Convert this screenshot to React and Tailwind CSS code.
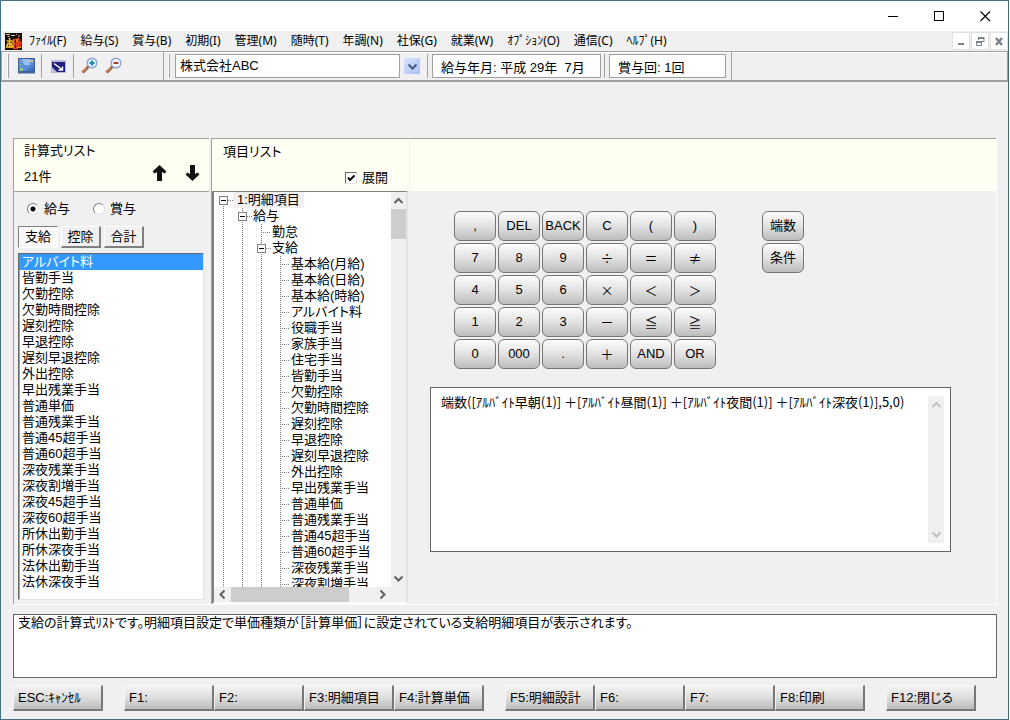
import React, { useState } from 'react';

const MENUS = ['ﾌｧｲﾙ(F)', '給与(S)', '賞与(B)', '初期(I)', '管理(M)', '随時(T)', '年調(N)', '社保(G)', '就業(W)', 'ｵﾌﾟｼｮﾝ(O)', '通信(C)', 'ﾍﾙﾌﾟ(H)'];

const FORMULAS = [
  'アルバイト料', '皆勤手当', '欠勤控除', '欠勤時間控除', '遅刻控除', '早退控除', '遅刻早退控除',
  '外出控除', '早出残業手当', '普通単価', '普通残業手当', '普通45超手当', '普通60超手当', '深夜残業手当',
  '深夜割増手当', '深夜45超手当', '深夜60超手当', '所休出勤手当', '所休深夜手当', '法休出勤手当', '法休深夜手当',
];

const TREE = [
  { depth: 0, label: '1:明細項目', open: true },
  { depth: 1, label: '給与', open: true },
  { depth: 2, label: '勤怠' },
  { depth: 2, label: '支給', open: true },
  ...[
    '基本給(月給)', '基本給(日給)', '基本給(時給)', 'アルバイト料', '役職手当', '家族手当', '住宅手当',
    '皆勤手当', '欠勤控除', '欠勤時間控除', '遅刻控除', '早退控除', '遅刻早退控除', '外出控除',
    '早出残業手当', '普通単価', '普通残業手当', '普通45超手当', '普通60超手当', '深夜残業手当', '深夜割増手当',
  ].map((label) => ({ depth: 3, label })),
];

const KEYS = [
  ',', 'DEL', 'BACK', 'C', '(', ')',
  '7', '8', '9', '÷', '＝', '≠',
  '4', '5', '6', '×', '＜', '＞',
  '1', '2', '3', '－', '≦', '≧',
  '0', '000', '.', '＋', 'AND', 'OR',
];

const FUNCTION_KEYS = [
  ['ESC:ｷｬﾝｾﾙ'],
  ['F1:', 'F2:', 'F3:明細項目', 'F4:計算単価'],
  ['F5:明細設計', 'F6:', 'F7:', 'F8:印刷'],
  ['F12:閉じる'],
];

const FORMULA = '端数([ｱﾙﾊﾞｲﾄ早朝(1)] ＋[ｱﾙﾊﾞｲﾄ昼間(1)] ＋[ｱﾙﾊﾞｲﾄ夜間(1)] ＋[ｱﾙﾊﾞｲﾄ深夜(1)],5,0)';

function Chevron({ dir, className }) {
  const d = {
    up: 'M1.5 8 L5.5 4 L9.5 8',
    down: 'M1.5 3.5 L5.5 7.5 L9.5 3.5',
    left: 'M7.5 1.5 L3.5 5.5 L7.5 9.5',
    right: 'M3.5 1.5 L7.5 5.5 L3.5 9.5',
  }[dir];
  return (
    <svg width="11" height="11" viewBox="0 0 11 11" fill="none" stroke="currentColor" strokeWidth="2" className={className} aria-hidden="true">
      <path d={d} />
    </svg>
  );
}

function TitleBar() {
  const cell = 'flex h-[30px] w-[46px] items-center justify-center hover:bg-gray-200';
  return (
    <header className="flex h-[30px] justify-end bg-white">
      <button aria-label="最小化" className={cell}>
        <svg width="11" height="11"><path d="M0 5.5H10" stroke="#000" /></svg>
      </button>
      <button aria-label="最大化" className={cell}>
        <svg width="11" height="11"><rect x="0.5" y="0.5" width="9" height="9" fill="none" stroke="#000" /></svg>
      </button>
      <button aria-label="閉じる" className={cell}>
        <svg width="11" height="11"><path d="M0.5 0.5L10 10M10 0.5L0.5 10" stroke="#000" strokeWidth="1.1" /></svg>
      </button>
    </header>
  );
}

function AppIcon() {
  return (
    <svg width="17" height="17" viewBox="0 0 17 17" className="shrink-0" aria-hidden="true">
      <rect width="17" height="17" fill="#180a06" />
      <path d="M1 1.5h4M2.5 3.5h2M6 2.5h4M11 1.5h1M13 3.5l2-1" stroke="#cfcac2" strokeWidth="1" />
      <path d="M4 5l1 2M1.5 8h6M2 10.500h5M4.500 8v7M2.500 11l-1 4M6 11l1.500 4M2 14h5" stroke="#f6c028" strokeWidth="1.600" fill="none" />
      <path d="M9 6.500h3v9H9zM9 11h3M13 5l2 3M12 9.500h5M13.500 8v7M15.500 10v5" stroke="#e6401c" strokeWidth="1.700" fill="none" />
      <path d="M8 7v8M12 6v3M12 14.500h4" stroke="#f6a828" strokeWidth="1.200" />
    </svg>
  );
}

function MenuBar() {
  const cell = 'flex h-[18px] w-[18px] items-center justify-center border border-[#e0e0e0] bg-white';
  return (
    <nav className="flex h-5 items-center bg-[#f0f0f0] pl-1 font-['Noto_Sans','Noto_Sans_CJK_JP',sans-serif] text-xs leading-4">
      <AppIcon />
      <div className="ml-[7px] flex gap-3.5">
        {MENUS.map((m) => (
          <button key={m} className="whitespace-nowrap">{m}</button>
        ))}
      </div>
      <div className="ml-auto flex gap-px bg-[#f0f0f0]">
        <button aria-label="子ウィンドウを最小化" className={cell}>
          <svg width="10" height="10"><path d="M2 8H8" stroke="#76838b" strokeWidth="2" /></svg>
        </button>
        <button aria-label="子ウィンドウを元に戻す" className={cell}>
          <svg width="10" height="10" fill="none" stroke="#76838b">
            <path d="M3.500 4V1.500H9M9 1V5.500H7M1 5.500H6.500V9.500H1.500V5" strokeWidth="1" />
            <path d="M3 2H9M1 6H7" strokeWidth="2" />
          </svg>
        </button>
        <button aria-label="子ウィンドウを閉じる" className={cell}>
          <svg width="10" height="10"><path d="M2 2L8 9M8 2L2 9" stroke="#76838b" strokeWidth="2.400" /></svg>
        </button>
      </div>
    </nav>
  );
}

function Magnifier({ plus }) {
  return (
    <svg width="18" height="18" viewBox="0 0 18 18" aria-hidden="true">
      <path d="M1.500 15.500L7 10" stroke="#9a5a3c" strokeWidth="3" />
      <path d="M1.500 14.500L6.500 9.500" stroke="#e39a62" strokeWidth="1.200" />
      <path d="M6.500 10.500L8 9" stroke="#4a5a80" strokeWidth="2" />
      <circle cx="11" cy="6" r="4.800" fill={plus ? '#d9f1fb' : '#f1f4fc'} stroke="#8fa3cf" strokeWidth="1.400" />
      {plus ? (
        <path d="M8.500 6h5M11 3.500v5" stroke="#2387b8" strokeWidth="2" />
      ) : (
        <path d="M8.500 6h5" stroke="#9c4436" strokeWidth="2" />
      )}
    </svg>
  );
}

function ToolBar() {
  return (
    <div className="flex h-[31px] items-center border border-[#a0a0a0] border-b-2 bg-[#f0f0f0] shadow-[inset_1px_1px_0_#fff]">
      <div className="ml-[5px] h-6 w-0.5 border-r border-[#a0a0a0] bg-white" />
      <button aria-label="メニュー画面" className="ml-2 flex w-[19px] justify-center">
        <svg width="17" height="16" viewBox="0 0 17 16">
          <defs>
            <linearGradient id="desk" x1="0" y1="0" x2="1" y2="1">
              <stop offset="0" stopColor="#5f93dc" /><stop offset="0.6" stopColor="#5b8fe0" /><stop offset="1" stopColor="#2c55a8" />
            </linearGradient>
          </defs>
          <rect x="0.500" y="0.500" width="16" height="13" fill="url(#desk)" stroke="#3a5c9c" />
          <path d="M0 14.500h17" stroke="#44649c" strokeWidth="2" />
          <path d="M4 1h8v6H6z" fill="#b4d4f8" opacity="0.7" />
          <rect x="1" y="2" width="3" height="2" fill="#7fa08a" /><rect x="1" y="6" width="3" height="2" fill="#6bb07a" />
          <rect x="2" y="10" width="3" height="3" fill="#9cc86c" /><rect x="12" y="2" width="3" height="2" fill="#d6c07c" />
        </svg>
      </button>
      <div className="ml-[5px] h-6 w-px bg-[#a0a0a0]" />
      <button aria-label="画面切替" className="ml-[7px] flex w-[18px] justify-center">
        <svg width="15" height="13" viewBox="0 0 15 13">
          <rect width="15" height="13" fill="#b9b9dc" />
          <rect x="1" y="2" width="13" height="10" fill="#20207c" />
          <path d="M1 12V7l5 5z" fill="#b9b9dc" />
          <path d="M3 3.500L11 9.500M11.500 6.500v3.500H7.500" stroke="#fff" strokeWidth="1.400" fill="none" />
        </svg>
      </button>
      <div className="ml-1.5 h-6 w-px bg-[#a0a0a0]" />
      <button aria-label="拡大" className="ml-[7px]"><Magnifier plus /></button>
      <button aria-label="縮小" className="ml-1.5"><Magnifier /></button>
      <div className="ml-10 h-full w-px bg-[#a0a0a0]" />
      <div className="ml-1 h-6 w-0.5 border-r border-[#a0a0a0] bg-white" />
      <select aria-label="会社" className="ml-[5px] h-6 w-[225px] appearance-none border border-[#a0a0a0] bg-white pl-1">
        <option>株式会社ABC</option>
      </select>
      <button aria-label="会社を選択" className="ml-1 flex h-4 w-4 items-center justify-center bg-linear-to-br from-[#dbe5fc] to-[#a9bff5] text-[#44598c]">
        <Chevron dir="down" />
      </button>
      <div className="ml-[7px] h-6 w-px bg-[#a0a0a0]" />
      <input aria-label="給与年月" readOnly value={'給与年月: 平成 29年  7月'} className="ml-1 h-6 w-[169px] border border-[#a0a0a0] bg-white px-2" />
      <div className="ml-[3px] h-6 w-px bg-[#a0a0a0]" />
      <input aria-label="賞与回" readOnly value="賞与回: 1回" className="ml-1 h-6 w-[117px] border border-[#a0a0a0] bg-white px-2" />
      <div className="ml-[5px] h-full w-px bg-[#a0a0a0]" />
    </div>
  );
}

function Arrow({ down }) {
  return (
    <svg width="15" height="16" viewBox="0 0 15 16" aria-hidden="true">
      {down ? (
        <path d="M7.500 16L14.500 9.500 12.500 7.500 10 9V0H5V9L2.500 7.500 0.500 9.500z" fill="#111" />
      ) : (
        <path d="M7.500 0L14.500 6.500 12.500 8.500 10 7V16H5V7L2.500 8.500 0.500 6.500z" fill="#111" />
      )}
    </svg>
  );
}

function RadioOption({ label, checked, onChange }) {
  return (
    <label className="flex items-center gap-[5px]">
      <input
        type="radio"
        name="payType"
        checked={checked}
        onChange={onChange}
        className="m-0 h-3 w-3 appearance-none rounded-full border border-[#808080] border-r-[#e3e3e3] border-b-[#e3e3e3] bg-white checked:bg-[radial-gradient(circle,#000_2px,#fff_3px)]"
      />
      {label}
    </label>
  );
}

function FormulaPanel() {
  const [pay, setPay] = useState(0);
  const [tab, setTab] = useState(0);
  const [selected, setSelected] = useState(0);
  return (
    <section className="flex w-[196px] shrink-0 flex-col">
      <div className="flex h-[53px] justify-between border-t border-l border-[#a0a0a0] bg-[#fffff4] pt-0.5 pr-[9px] pl-2.5">
        <div>
          <h2 className="leading-5">計算式リスト</h2>
          <p className="pt-1.5 leading-5">21件</p>
        </div>
        <div className="flex items-end gap-[18px] pb-2.5">
          <button aria-label="上へ移動"><Arrow /></button>
          <button aria-label="下へ移動"><Arrow down /></button>
        </div>
      </div>
      <div className="flex flex-1 flex-col border-t border-l border-[#a0a0a0] pr-[5px] pl-1">
        <div className="mt-[7px] flex gap-[23px] pl-[9px] leading-5">
          {['給与', '賞与'].map((label, i) => (
            <RadioOption key={label} label={label} checked={pay === i} onChange={() => setPay(i)} />
          ))}
        </div>
        <div className="mt-[7px] flex gap-[3px]">
          {['支給', '控除', '合計'].map((label, i) => (
            <button
              key={label}
              onClick={() => setTab(i)}
              className={
                'h-[22px] w-10 border leading-4 ' +
                (tab === i
                  ? 'border-[#808080] border-r-white border-b-white bg-[#f8f8f8]'
                  : 'border-white border-r-2 border-b-2 border-r-[#808080] border-b-[#808080] bg-[#f0f0f0]')
              }
            >
              {label}
            </button>
          ))}
        </div>
        <ul role="listbox" aria-label="計算式リスト" className="mt-[5px] mb-1 h-[347px] border border-[#696969] border-r-[#e3e3e3] border-b-[#e3e3e3] bg-white shadow-[inset_1px_0_0_#a0a0a0]">
          {FORMULAS.map((f, i) => (
            <li
              key={f}
              role="option"
              aria-selected={i === selected}
              onClick={() => setSelected(i)}
              className={'h-4 pl-[3px] leading-4 ' + (i === selected ? 'bg-[#3399ff] text-white' : '')}
            >
              {f}
            </li>
          ))}
        </ul>
      </div>
    </section>
  );
}

function Guide({ branch, first }) {
  const line = { stroke: '#808080', strokeDasharray: '1 1' };
  return (
    <svg width="19" height="16" className="shrink-0" aria-hidden="true">
      <path d={first ? 'M9.500 8V16' : 'M9.500 0V16'} {...line} />
      {branch && <path d="M9 8.500H19" {...line} />}
    </svg>
  );
}

function Expander({ first }) {
  return (
    <button aria-label="折りたたむ" className="shrink-0">
      <svg width="19" height="16" className="block">
        <path d={first ? 'M9.500 12V16' : 'M9.500 0V16'} stroke="#808080" strokeDasharray="1 1" />
        <path d="M14 8.500H19" stroke="#808080" strokeDasharray="1 1" />
        <rect x="5.500" y="4.500" width="8" height="8" fill="#fff" stroke="#808080" />
        <path d="M7 8.500H12" stroke="#000" />
      </svg>
    </button>
  );
}

function TreePanel() {
  const [expanded, setExpanded] = useState(true);
  return (
    <section className="flex w-[198px] shrink-0 flex-col border-l border-[#a0a0a0]">
      <div className="h-[53px] border-t border-[#a0a0a0] bg-[#fffff4] pt-[3px] pr-[21px] pl-[11px]">
        <h2 className="leading-5">項目リスト</h2>
        <label className="mt-1.5 flex items-center justify-end gap-[5px] leading-5">
          <span className="relative flex h-3 w-3">
            <input
              type="checkbox"
              checked={expanded}
              onChange={(e) => setExpanded(e.target.checked)}
              className="peer h-3 w-3 appearance-none border border-[#696969] border-r-[#e3e3e3] border-b-[#e3e3e3] bg-white"
            />
            <svg width="12" height="12" className="pointer-events-none absolute inset-0 hidden peer-checked:block">
              <path d="M3 5.500L5 8L9.500 3.500" fill="none" stroke="#000" strokeWidth="2" />
            </svg>
          </span>
          展開
        </label>
      </div>
      <div className="mr-px border-2 border-[#808080] border-t border-r-[#e3e3e3] border-b-[#fff] bg-white">
        <div className="flex h-[395px]">
          <ul role="tree" aria-label="項目リスト" className="min-w-0 flex-1 overflow-hidden">
            {TREE.map((node, i) => (
              <li key={i} role="treeitem" aria-level={node.depth + 1} className="flex h-4 leading-4 whitespace-nowrap">
                {Array.from({ length: node.depth }, (_, d) => <Guide key={d} />)}
                {node.open ? <Expander first={i === 0} /> : <Guide branch />}
                <span className={i === 0 ? 'bg-[#f0f0f0] px-1' : 'px-px'}>{node.label}</span>
              </li>
            ))}
          </ul>
          <div className="flex w-[15px] flex-col items-center bg-[#f0f0f0] text-[#606060]">
            <button aria-label="上へスクロール" className="flex h-[17px] items-center"><Chevron dir="up" /></button>
            <div className="h-[30px] w-full bg-[#cdcdcd]" />
            <button aria-label="下へスクロール" className="mt-auto flex h-[17px] items-center"><Chevron dir="down" /></button>
          </div>
        </div>
        <div className="flex h-[15px] items-center bg-[#f0f0f0] pr-[15px] text-[#606060]">
          <button aria-label="左へスクロール" className="flex w-[17px] justify-center"><Chevron dir="left" /></button>
          <div className="h-full w-[118px] bg-[#cdcdcd]" />
          <button aria-label="右へスクロール" className="ml-auto flex w-[17px] justify-center"><Chevron dir="right" /></button>
        </div>
      </div>
    </section>
  );
}

function Key({ children, symbol, onClick }) {
  return (
    <button
      onClick={onClick}
      className={
        'flex h-[30px] w-[42px] items-center justify-center rounded-md border border-[#757575] bg-linear-to-b from-[#fcfcfc] via-[#e2e2e2] to-[#bdbdbd] whitespace-nowrap ' +
        (symbol ? "font-['Noto_Sans_CJK_JP',sans-serif] [font-feature-settings:normal]" : '')
      }
    >
      {children}
    </button>
  );
}

function EditorPanel() {
  const [formula, setFormula] = useState(FORMULA);
  return (
    <section className="flex min-w-0 flex-1 flex-col border-r border-white">
      <div className="h-[53px] border-t border-l border-t-[#a0a0a0] border-l-[#f0f0f0] bg-[#fffff4]" />
      <div className="mt-5 ml-[45px] flex gap-[46px]">
        <div className="grid grid-cols-[repeat(6,42px)] gap-0.5">
          {KEYS.map((k) => (
            <Key key={k} symbol={k.charCodeAt(0) > 127} onClick={() => !/[A-Z]/.test(k) && setFormula(formula + k)}>{k}</Key>
          ))}
        </div>
        <div className="flex flex-col gap-0.5">
          <Key>端数</Key>
          <Key>条件</Key>
        </div>
      </div>
      <div className="mt-[18px] mr-[45px] ml-[21px] flex h-[165px] border border-[#646464] bg-white py-1.5 pr-1.5 pl-2.5">
        <textarea
          aria-label="計算式"
          value={formula}
          onChange={(e) => setFormula(e.target.value)}
          className="min-w-0 flex-1 resize-none overflow-hidden font-['Noto_Sans_CJK_JP',sans-serif] leading-4 outline-none [font-feature-settings:normal]"
        />
        <div className="my-0.5 flex w-4 flex-col items-center justify-between bg-[#f0f0f0] text-[#bfbfbf]">
          <button aria-label="上へスクロール" className="flex h-[17px] items-center"><Chevron dir="up" /></button>
          <button aria-label="下へスクロール" className="flex h-[17px] items-center"><Chevron dir="down" /></button>
        </div>
      </div>
    </section>
  );
}

export default function App() {
  return (
    <div className="bg-white pr-px">
      <div className="flex min-h-screen flex-col border border-[#42718a] bg-[#f0f0f0] font-['Liberation_Sans','Noto_Sans_CJK_JP',sans-serif] text-[13px] leading-4 text-black [font-feature-settings:'palt']">
        <TitleBar />
        <MenuBar />
        <ToolBar />
        <main className="mt-14 mr-[11px] ml-3 flex gap-0.5 border-b border-white">
          <FormulaPanel />
          <div className="flex min-w-0 flex-1">
            <TreePanel />
            <EditorPanel />
          </div>
        </main>
        <p className="mt-[9px] mr-[11px] ml-3 h-16 border border-[#646464] bg-white px-1">
          支給の計算式ﾘｽﾄです。明細項目設定で単価種類が［計算単価］に設定されている支給明細項目が表示されます。
        </p>
        <footer className="mt-[7px] mb-2 ml-3 flex gap-[21px] overflow-hidden">
          {FUNCTION_KEYS.map((group, g) => (
            <div key={g} className="flex">
              {group.map((label) => (
                <button
                  key={label}
                  className="h-[26px] w-[90px] border border-[#f4f4f4] border-r-2 border-b-2 border-r-[#787878] border-b-[#787878] bg-linear-to-b from-[#f4f4f4] via-[#dedede] to-[#bcbcbc] pl-1 text-left whitespace-nowrap"
                >
                  {label}
                </button>
              ))}
            </div>
          ))}
        </footer>
      </div>
    </div>
  );
}
